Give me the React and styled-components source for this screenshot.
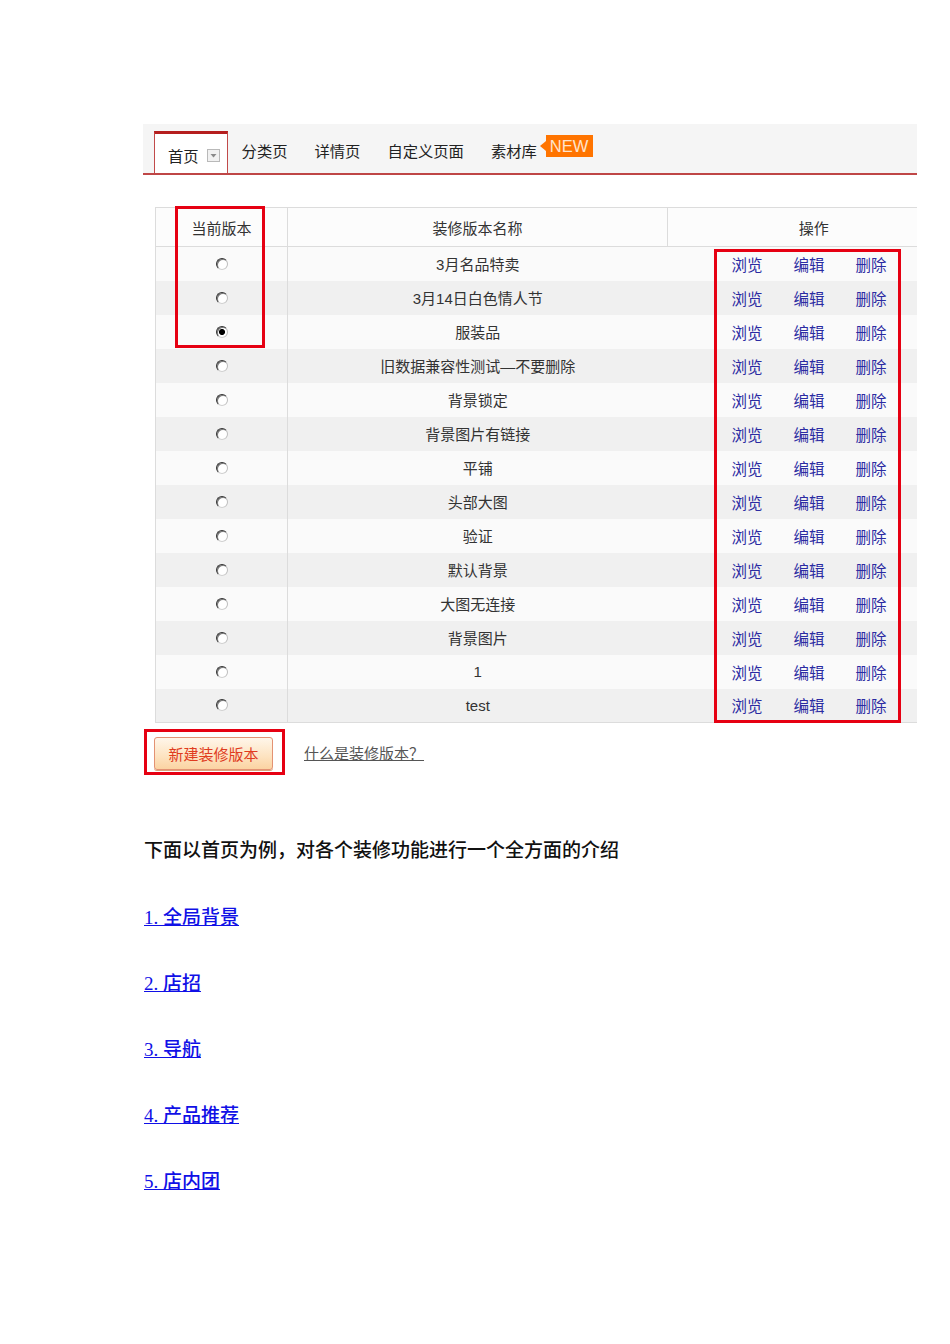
import React from 'react';
import styled, { createGlobalStyle } from 'styled-components';

const GlobalStyle = createGlobalStyle`
  body {
    margin: 0;
    background: #ffffff;
    font-family: "Liberation Sans", "Noto Sans CJK SC", sans-serif;
    color: #333;
  }
`;

const versions = [
  '3月名品特卖',
  '3月14日白色情人节',
  '服装品',
  '旧数据兼容性测试—不要删除',
  '背景锁定',
  '背景图片有链接',
  '平铺',
  '头部大图',
  '验证',
  '默认背景',
  '大图无连接',
  '背景图片',
  '1',
  'test',
];

const sections = ['1. 全局背景', '2. 店招', '3. 导航', '4. 产品推荐', '5. 店内团'];

const App = () => {
  return (
    <>
      <GlobalStyle />
      <Page>
        <TabBar>
          <Tab $active>
            首页
            <DropIcon width="13" height="13" viewBox="0 0 13 13">
              <rect x="0.5" y="0.5" width="12" height="12" fill="#f1f1f1" stroke="#b9b9b9" />
              <path d="M3.5 5 L9.5 5 L6.5 8.5 Z" fill="#8a8a8a" />
            </DropIcon>
          </Tab>
          <Tab>分类页</Tab>
          <Tab>详情页</Tab>
          <Tab>自定义页面</Tab>
          <Tab>
            素材库
            <NewBadge>NEW</NewBadge>
          </Tab>
        </TabBar>

        <TableWrap>
          {/* the table runs wider than the visible area and is cut at the right */}
          <TableClip>
            <VersionTable>
              <colgroup>
                <col style={{ width: 132 }} />
                <col style={{ width: 380 }} />
                <col style={{ width: 292 }} />
              </colgroup>
              <thead>
                <tr>
                  <HeadCell $divider>当前版本</HeadCell>
                  <HeadCell $divider>装修版本名称</HeadCell>
                  <HeadCell>操作</HeadCell>
                </tr>
              </thead>
              <tbody>
                {versions.map((name, i) => (
                  <Row key={name} $alt={i % 2 === 1}>
                    <RadioCell>
                      <Radio $checked={i === 2} />
                    </RadioCell>
                    <NameCell>{name}</NameCell>
                    <ActionCell>
                      <Actions>
                        <ActionLink href="#">浏览</ActionLink>
                        <ActionLink href="#">编辑</ActionLink>
                        <ActionLink href="#">删除</ActionLink>
                      </Actions>
                    </ActionCell>
                  </Row>
                ))}
              </tbody>
            </VersionTable>
          </TableClip>
          <Highlight style={{ left: 20, top: -1, width: 90, height: 142 }} />
          <Highlight style={{ left: 559, top: 42, width: 187, height: 474 }} />
        </TableWrap>

        <ButtonRow>
          <ButtonFrame>
            <NewButton>新建装修版本</NewButton>
          </ButtonFrame>
          <HelpLink href="#">什么是装修版本？</HelpLink>
        </ButtonRow>

        <Intro>下面以首页为例，对各个装修功能进行一个全方面的介绍</Intro>

        <SectionList>
          {sections.map((s) => (
            <SectionLink key={s} href="#">{s}</SectionLink>
          ))}
        </SectionList>
      </Page>
    </>
  );
};

const Page = styled.div`
  padding: 124px 0 120px 143px;
  width: 774px;
`;

const TabBar = styled.div`
  display: flex;
  align-items: flex-end;
  height: 49px;
  padding-left: 11px;
  background: #f5f5f5;
  border-bottom: 2px solid #bf4646;
`;

const Tab = styled.div`
  box-sizing: border-box;
  height: 42px;
  display: flex;
  align-items: center;
  font-size: 15.3px;
  color: #222;
  white-space: nowrap;
  padding: ${(p) => (p.$active ? '2px 7px 0 13px' : '0 13px 4px 14px')};
  background: ${(p) => (p.$active ? '#ffffff' : 'transparent')};
  border-top: ${(p) => (p.$active ? '3px solid #b51e1e' : 'none')};
  border-left: ${(p) => (p.$active ? '1px solid #c14a4a' : 'none')};
  border-right: ${(p) => (p.$active ? '1px solid #c14a4a' : 'none')};
`;

const DropIcon = styled.svg`
  margin-left: 8px;
  margin-top: 2px;
`;

const NewBadge = styled.span`
  position: relative;
  top: -4px;
  margin-left: 9px;
  height: 22px;
  padding: 0 5px 0 4px;
  display: inline-flex;
  align-items: center;
  background: #ff7400;
  color: #ffe4cc;
  font-family: "Liberation Sans", sans-serif;
  font-size: 16.5px;

  &::before {
    content: '';
    position: absolute;
    left: -6px;
    top: 6px;
    border-top: 5px solid transparent;
    border-bottom: 5px solid transparent;
    border-right: 6px solid #ff7400;
  }
`;

const TableWrap = styled.div`
  position: relative;
  margin: 32px 0 0 12px;
  width: 762px;
`;

const TableClip = styled.div`
  width: 762px;
  overflow: hidden;
`;

const VersionTable = styled.table`
  width: 804px;
  border-collapse: collapse;
  table-layout: fixed;
  font-size: 15px;
  color: #333;
  border-top: 1px solid #dcdcdc;
  border-bottom: 1px solid #dcdcdc;
  border-left: 1px solid #dcdcdc;
`;

const HeadCell = styled.th`
  height: 38px;
  padding: 0;
  font-weight: normal;
  text-align: center;
  background: #fcfcfc;
  border-bottom: 1px solid #dcdcdc;
  border-right: ${(p) => (p.$divider ? '1px solid #dcdcdc' : 'none')};
`;

const Row = styled.tr`
  height: 34px;
  background: ${(p) => (p.$alt ? '#f0f0f0' : '#fafafa')};
`;

const RadioCell = styled.td`
  padding: 0;
  text-align: center;
  border-right: 1px solid #dcdcdc;
  line-height: 0;
`;

const Radio = styled.span`
  display: inline-block;
  box-sizing: border-box;
  width: 12px;
  height: 12px;
  border-radius: 50%;
  border: 1px solid;
  border-color: #333 #bdbdbd #d0d0d0 #333;
  background: ${(p) =>
    p.$checked
      ? 'radial-gradient(circle, #000 0 2.7px, #fff 3.3px)'
      : '#ffffff'};
  box-shadow: inset 1px 1px 0 #777;
`;

const NameCell = styled.td`
  padding: 0;
  text-align: center;
`;

const ActionCell = styled.td`
  padding: 0;
`;

const Actions = styled.div`
  display: flex;
  gap: 31px;
  padding-left: 64px;
`;

const ActionLink = styled.a`
  color: #2b2ba2;
  text-decoration: none;
  font-size: 15.5px;
`;

const Highlight = styled.div`
  position: absolute;
  box-sizing: border-box;
  border: 3px solid #e60012;
  pointer-events: none;
`;

const ButtonRow = styled.div`
  display: flex;
  align-items: center;
  margin: 6px 0 0 1px;
`;

const ButtonFrame = styled.div`
  box-sizing: border-box;
  width: 141px;
  height: 46px;
  padding: 5px 9px 3px 7px;
  border: 3px solid #e60012;
`;

const NewButton = styled.button`
  box-sizing: border-box;
  width: 119px;
  height: 33px;
  padding: 0;
  border: 1px solid #e39273;
  border-radius: 3px;
  background: linear-gradient(#fff6ea, #fde3c0 60%, #fbd3a2);
  box-shadow: 0 1px 0 #d9a27c;
  color: #e03c1e;
  font-family: "Liberation Sans", "Noto Sans CJK SC", sans-serif;
  font-size: 15px;
  cursor: pointer;
`;

const HelpLink = styled.a`
  margin-left: 19px;
  color: #555;
  font-size: 15px;
  text-decoration: underline;
`;

const Intro = styled.p`
  margin: 64px 0 0 1px;
  line-height: 24px;
  font-size: 19px;
  font-weight: 500;
  color: #111;
  font-family: "Liberation Serif", "Noto Sans CJK SC", serif;
`;

const SectionList = styled.div`
  display: flex;
  flex-direction: column;
  align-items: flex-start;
  gap: 42px;
  margin: 43px 0 0 1px;
`;

const SectionLink = styled.a`
  line-height: 24px;
  font-size: 19px;
  font-weight: 500;
  color: #1010e6;
  text-decoration: underline;
  font-family: "Liberation Serif", "Noto Sans CJK SC", serif;
`;

export default App;
